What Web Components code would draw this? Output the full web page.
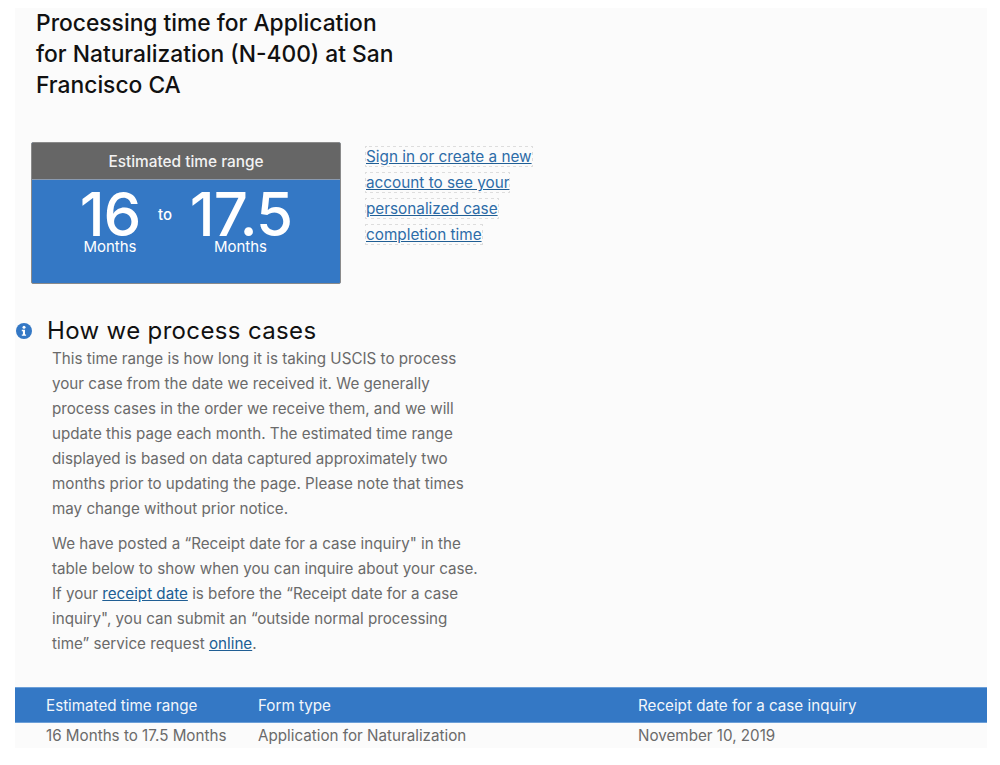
<!DOCTYPE html>
<html><head><meta charset="utf-8"><title>Processing time</title>
<style>html,body{margin:0;background:#fff}body{font-family:Inter,"Liberation Sans",sans-serif;color:#5f5f5f}</style>
</head><body>
<case-page>
<page-title slot="x">Processing time for Application<br>for Naturalization (N-400) at San<br>Francisco CA</page-title>
<div style="display:flex">
<time-card low="16" high="17.5"></time-card>
<sign-link>Sign in or create a new<br>account to see your<br>personalized case<br>completion time</sign-link>
</div>
<info-head>How we process cases</info-head>
<info-body>
<p>This time range is how long it is taking USCIS to process<br>your case from the date we received it. We generally<br>process cases in the order we receive them, and we will<br>update this page each month. The estimated time range<br>displayed is based on data captured approximately two<br>months prior to updating the page. Please note that times<br>may change without prior notice.</p>
<p>We have posted a “Receipt date for a case inquiry" in the<br>table below to show when you can inquire about your case.<br>If your <a href="#" style="color:#205e94">receipt date</a> is before the “Receipt date for a case<br>inquiry", you can submit an “outside normal processing<br>time” service request <a href="#" style="color:#205e94">online</a>.</p>
</info-body>
<time-table></time-table>
</case-page>
<script>
function def(name,html){customElements.define(name,class extends HTMLElement{constructor(){super();this.attachShadow({mode:'open'}).innerHTML=html}})}
def('case-page',`<style>:host{display:block;margin:8px 13px 0 15px;width:972px;height:740px;background:#fbfbfb;overflow:hidden}</style><slot name="x"></slot><slot></slot>`);
def('page-title',`<style>:host{display:block;margin:-1px 0 42px 21px;font-size:22.8px;font-weight:550;line-height:31px;color:#111;height:93px}</style><slot></slot>`);
class TimeCard extends HTMLElement{connectedCallback(){const l=this.getAttribute('low'),h=this.getAttribute('high');
this.attachShadow({mode:'open'}).innerHTML=`<style>
:host{display:block;margin-left:16px;width:310px;height:142px;box-sizing:border-box;border:1px solid #8a8a8a;border-radius:2px;background:#3478c5;color:#fff;overflow:hidden}
.h{height:36px;background:#666;display:flex;align-items:center;justify-content:center;font-size:15.4px;font-weight:500;color:#f2f2f2;border-bottom:1px solid #8a9ab0}
.r{display:grid;grid-template-columns:96px 14px 138px;padding:7px 0 0 30px;text-align:center}
.n{font-size:60px;line-height:54px;font-weight:500;letter-spacing:-1px;white-space:nowrap}
.m{font-size:15px;line-height:12px}
.t{font-size:15px;font-weight:500;line-height:56px}
</style><div class="h">Estimated time range</div><div class="r"><div><div class="n">${l}</div><div class="m">Months</div></div><div class="t">to</div><div><div class="n">${h}</div><div class="m" style="margin-left:-1px">Months</div></div></div>`}}
customElements.define('time-card',TimeCard);
def('sign-link',`<style>:host{display:block;margin:2px 0 0 25px;font-size:15.3px;line-height:26px}a{color:#2d6ca8;outline:1px dotted #ddd;text-decoration:underline;text-decoration-color:#205e94}</style><a href="#"><slot></slot></a>`);
def('info-head',`<style>:host{display:flex;align-items:center;margin:31px 0 0 1px;font-size:24px;line-height:30px;color:#111;letter-spacing:.35px;padding-top:1px}svg{margin-right:15px;flex:none}</style><svg width="16" height="16" viewBox="0 0 16 16"><circle cx="8" cy="8" r="8" fill="#3478c5"/><circle cx="8" cy="4.3" r="1.5" fill="#fff"/><path d="M5.8 6.8h3.2v4.6h1.1v1.4H5.8v-1.4h1.1V8.2H5.8z" fill="#fff"/></svg><slot></slot>`);
def('info-body',`<style>:host{display:block;margin:0 0 0 37px;font-size:15.2px;line-height:25px;color:#6a6a6a}::slotted(p){margin:0 0 10px}</style><slot></slot>`);
def('time-table',`<style>:host{display:block;margin-top:31px;font-size:15.2px}
.g{display:grid;grid-template-columns:212px 380px 1fr;padding-left:31px}
.h{background:#3478c5;color:#f2f6fb;height:36px;align-items:center;box-sizing:border-box;border-top:1px solid #6c9fd8;border-bottom:1px solid #6c9fd8}
.b{color:#6a6a6a;height:25px;align-items:center}</style>
<div class="g h"><span>Estimated time range</span><span>Form type</span><span>Receipt date for a case inquiry</span></div>
<div class="g b"><span>16 Months to 17.5 Months</span><span>Application for Naturalization</span><span>November 10, 2019</span></div>`);
</script>
</body></html>
